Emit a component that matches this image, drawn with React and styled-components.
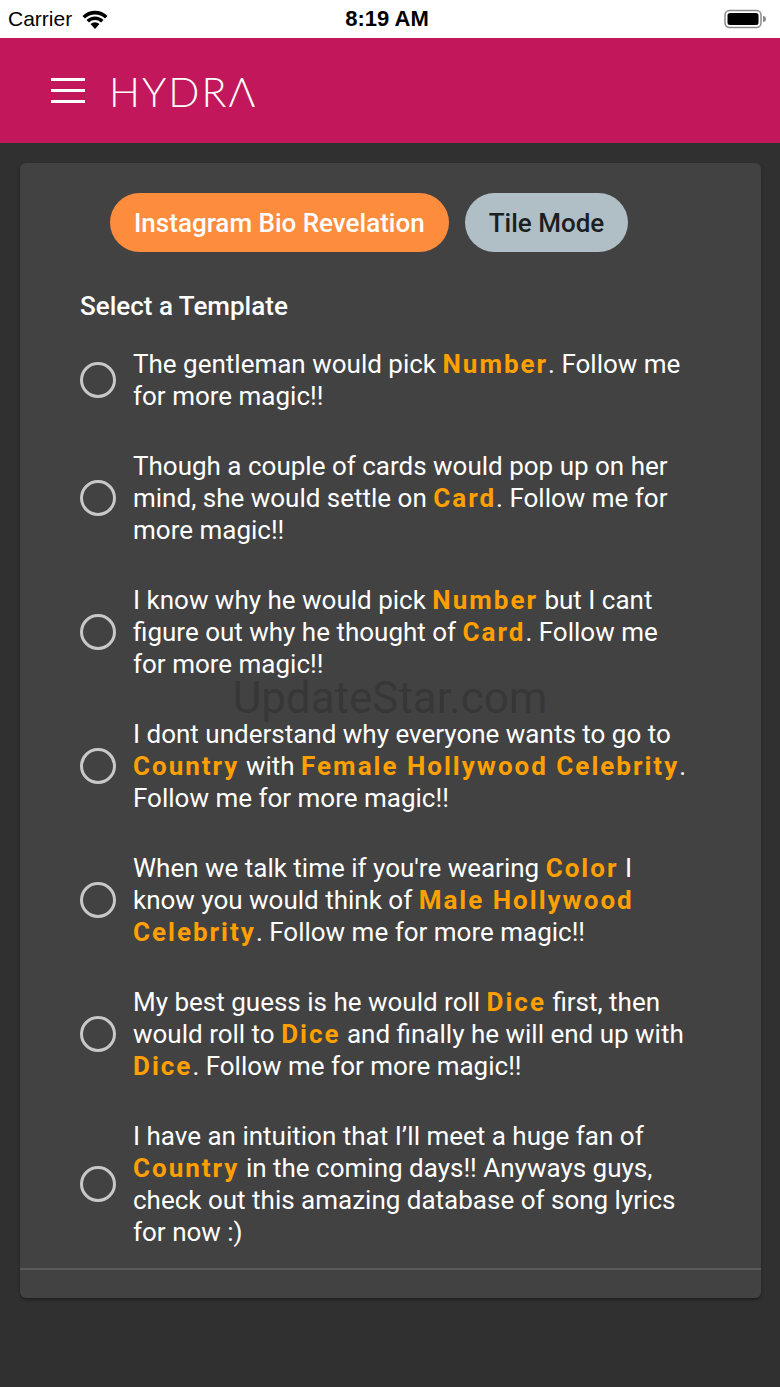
import React from 'react';
import styled, { createGlobalStyle } from 'styled-components';

const GlobalStyle = createGlobalStyle`
  * { box-sizing: border-box; }
  body {
    margin: 0;
    background: #303030;
    font-family: Roboto, "Noto Sans", "Liberation Sans", sans-serif;
  }
`;

const Page = styled.div`
  position: relative;
  min-height: 1387px;
  background: #303030;
`;

const StatusBar = styled.div`
  height: 38px;
  background: #ffffff;
  display: grid;
  grid-template-columns: 1fr auto 1fr;
  align-items: center;
  padding: 0 14px 0 8px;
  color: #000;
`;

const Carrier = styled.div`
  display: flex;
  align-items: center;
  gap: 8px;
  font-size: 21px;
  font-family: "Liberation Sans", Arial, sans-serif;
`;

const Clock = styled.div`
  font-size: 22px;
  font-weight: 600;
  font-family: "Liberation Sans", Arial, sans-serif;
`;

const BatteryWrap = styled.div`
  display: flex;
  justify-content: flex-end;
`;

const Header = styled.header`
  height: 105px;
  background: #c2185b;
  display: flex;
  align-items: center;
  padding-left: 51px;
  gap: 24px;
`;

const Burger = styled.div`
  width: 34px;
  display: flex;
  flex-direction: column;
  gap: 8px;
  span {
    display: block;
    height: 3px;
    background: #fff;
  }
`;

const Logo = styled.div`
  color: #fff;
  font-family: Lato, Roboto, sans-serif;
  font-weight: 300;
  font-size: 41px;
  letter-spacing: 2px;
  line-height: 1;
  margin-top: 2px;
`;

const Card = styled.main`
  margin: 20px 19px 0 20px;
  background: #424242;
  border-radius: 6px;
  box-shadow: 0 2px 3px rgba(0, 0, 0, 0.35);
  padding: 30px 0 28px;
`;

const ModeRow = styled.div`
  display: flex;
  gap: 16px;
  padding-left: 90px;
`;

const ModeButton = styled.button`
  height: 59px;
  border: none;
  border-radius: 30px;
  padding: 0 ${p => p.$pad}px;
  font-family: Roboto, sans-serif;
  font-size: 26px;
  font-weight: 500;
  background: ${p => (p.$active ? '#fd8c3d' : '#b0bec5')};
  color: ${p => (p.$active ? '#ffffff' : '#1b1f22')};
`;

const Title = styled.h2`
  margin: 38px 0 26px 60px;
  font-size: 26px;
  line-height: 32px;
  font-weight: 500;
  color: #fff;
`;

const List = styled.ul`
  list-style: none;
  margin: 0;
  padding: 0 70px 20px 60px;
  display: flex;
  flex-direction: column;
  gap: 38px;
`;

const Item = styled.li`
  display: flex;
  align-items: center;
  gap: 17px;
`;

const Radio = styled.span`
  flex-shrink: 0;
  width: 36px;
  height: 36px;
  border-radius: 50%;
  border: 3px solid #c8c8c8;
`;

const ItemText = styled.p`
  margin: 0;
  font-size: 26px;
  line-height: 32px;
  color: #ffffff;
`;

const Hl = styled.b`
  color: #ffa000;
  font-weight: 700;
  letter-spacing: 2px;
`;

const Divider = styled.div`
  height: 2px;
  background: #595959;
`;

const Watermark = styled.div`
  position: absolute;
  top: 672px;
  left: 0;
  right: 0;
  text-align: center;
  font-size: 44px;
  color: rgba(0, 0, 0, 0.18);
  pointer-events: none;
`;

const Wifi = () => (
  <svg width="30" height="22" viewBox="0 0 30 22">
    <path d="M15 21 L10.5 16 A6.5 6.5 0 0 1 19.5 16 Z" fill="#000" />
    <path d="M6.5 12 A12 12 0 0 1 23.5 12 L21 14.6 A8.5 8.5 0 0 0 9 14.6 Z" fill="#000" />
    <path d="M2.5 8 A17.5 17.5 0 0 1 27.5 8 L25 10.6 A14 14 0 0 0 5 10.6 Z" fill="#000" />
  </svg>
);

const Battery = () => (
  <svg width="42" height="20" viewBox="0 0 42 20">
    <rect x="1" y="1.5" width="36" height="17" rx="4.5" fill="none" stroke="#8a8a8a" strokeWidth="1.5" />
    <rect x="3.5" y="4" width="31" height="12" rx="2.5" fill="#000" />
    <path d="M39 7 A3 3 0 0 1 39 13 Z" fill="#8a8a8a" />
  </svg>
);

const templates = [
  ['The gentleman would pick ', ['Number'], '. Follow me for more magic!!'],
  ['Though a couple of cards would pop up on her mind, she would settle on ', ['Card'], '. Follow me for more magic!!'],
  ['I know why he would pick ', ['Number'], ' but I cant figure out why he thought of ', ['Card'], '. Follow me for more magic!!'],
  ['I dont understand why everyone wants to go to ', ['Country'], ' with ', ['Female Hollywood Celebrity'], '. Follow me for more magic!!'],
  ["When we talk time if you're wearing ", ['Color'], ' I know you would think of ', ['Male Hollywood Celebrity'], '. Follow me for more magic!!'],
  ['My best guess is he would roll ', ['Dice'], ' first, then would roll to ', ['Dice'], ' and finally he will end up with ', ['Dice'], '. Follow me for more magic!!'],
  ['I have an intuition that I\u2019ll meet a huge fan of ', ['Country'], ' in the coming days!! Anyways guys, check out this amazing database of song lyrics for now :)'],
];

export default function App() {
  return (
    <Page>
      <GlobalStyle />
      <StatusBar>
        <Carrier>
          Carrier <Wifi />
        </Carrier>
        <Clock>8:19 AM</Clock>
        <BatteryWrap>
          <Battery />
        </BatteryWrap>
      </StatusBar>
      <Header>
        <Burger>
          <span />
          <span />
          <span />
        </Burger>
        <Logo>HYDRΛ</Logo>
      </Header>
      <Card>
        <ModeRow>
          <ModeButton $active $pad={24}>Instagram Bio Revelation</ModeButton>
          <ModeButton $pad={24}>Tile Mode</ModeButton>
        </ModeRow>
        <Title>Select a Template</Title>
        <List>
          {templates.map((parts, i) => (
            <Item key={i}>
              <Radio />
              <ItemText>
                {parts.map((p, j) =>
                  Array.isArray(p) ? <Hl key={j}>{p[0]}</Hl> : <React.Fragment key={j}>{p}</React.Fragment>
                )}
              </ItemText>
            </Item>
          ))}
        </List>
        <Divider />
      </Card>
      <Watermark>UpdateStar.com</Watermark>
    </Page>
  );
}
